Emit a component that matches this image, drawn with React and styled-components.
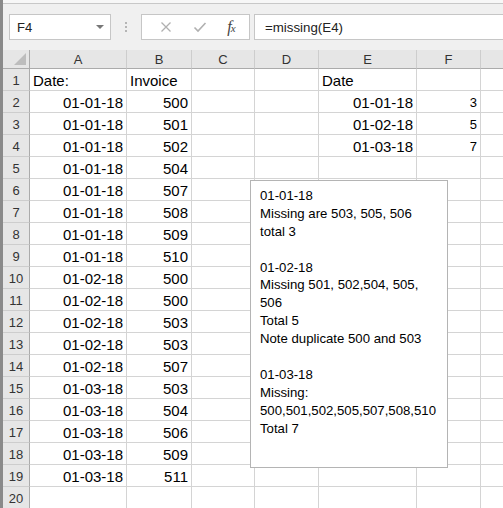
import React from 'react';
import styled, { createGlobalStyle } from 'styled-components';

const GlobalStyle = createGlobalStyle`
  html, body {
    margin: 0;
    padding: 0;
    background: #ffffff;
    overflow: hidden;
  }
  body {
    font-family: "Liberation Sans", Arial, sans-serif;
  }
`;

// row header, A..G (G runs off the window)
const COLS = [27, 97, 65, 63, 64, 98, 64, 80];
const LETTERS = ['A', 'B', 'C', 'D', 'E', 'F', 'G'];

const rows = [
  ['Date:', 'Invoice', '', '', 'Date', ''],
  ['01-01-18', '500', '', '', '01-01-18', '3'],
  ['01-01-18', '501', '', '', '01-02-18', '5'],
  ['01-01-18', '502', '', '', '01-03-18', '7'],
  ['01-01-18', '504'],
  ['01-01-18', '507'],
  ['01-01-18', '508'],
  ['01-01-18', '509'],
  ['01-01-18', '510'],
  ['01-02-18', '500'],
  ['01-02-18', '500'],
  ['01-02-18', '503'],
  ['01-02-18', '503'],
  ['01-02-18', '507'],
  ['01-03-18', '503'],
  ['01-03-18', '504'],
  ['01-03-18', '506'],
  ['01-03-18', '509'],
  ['01-03-18', '511'],
  [],
];

const noteLines = [
  '01-01-18',
  'Missing are 503, 505, 506',
  'total 3',
  '',
  '01-02-18',
  'Missing 501, 502,504, 505,',
  '506',
  'Total 5',
  'Note duplicate 500 and 503',
  '',
  '01-03-18',
  'Missing:',
  '500,501,502,505,507,508,510',
  'Total 7',
];

// Window chrome
const Page = styled.div`
  width: 503px;
  height: 508px;
  overflow: hidden;
  position: relative;
  border-left: 3px solid #8a8a8a;
  box-sizing: border-box;
`;

const TopStrip = styled.div`
  height: 3px;
  background: #f7f7f7;
  border-bottom: 1px solid #c8c8c8;
`;

const FormulaBar = styled.div`
  height: 46px;
  background: #f0f0f0;
  display: flex;
  align-items: flex-start;
  padding-top: 10px;
  padding-left: 6px;
  box-sizing: border-box;
`;

const NameBox = styled.div`
  width: 102px;
  height: 26px;
  box-sizing: border-box;
  background: #fff;
  border: 1px solid #c6c6c6;
  display: flex;
  align-items: center;
  justify-content: space-between;
  padding: 0 6px 0 7px;
  font-size: 13px;
  color: #222;
`;

const Caret = styled.span`
  width: 0;
  height: 0;
  border-left: 4px solid transparent;
  border-right: 4px solid transparent;
  border-top: 4px solid #777;
`;

const Grip = styled.div`
  width: 30px;
  height: 26px;
  display: flex;
  flex-direction: column;
  align-items: center;
  justify-content: center;
  gap: 2px;
  span {
    width: 2px;
    height: 2px;
    background: #b5b5b5;
  }
`;

const FxBox = styled.div`
  width: 109px;
  height: 26px;
  box-sizing: border-box;
  background: #fff;
  border: 1px solid #c6c6c6;
  display: flex;
  align-items: center;
  justify-content: space-around;
  padding: 0 4px 0 8px;
`;

const FxLabel = styled.span`
  font-family: "Liberation Serif", "Times New Roman", serif;
  font-style: italic;
  font-size: 16px;
  color: #444;
  letter-spacing: -1px;
  sub {
    font-size: 11px;
    vertical-align: 0;
  }
`;

const FormulaInput = styled.div`
  flex: 1;
  height: 26px;
  margin-left: 4px;
  box-sizing: border-box;
  background: #fff;
  border: 1px solid #c6c6c6;
  border-right: none;
  display: flex;
  align-items: center;
  padding-left: 10px;
  font-size: 13.3px;
  color: #222;
`;

// Sheet
const Sheet = styled.div`
  position: relative;
`;

const Grid = styled.div`
  display: grid;
  grid-template-columns: ${COLS.map((w) => w + 'px').join(' ')};
  grid-template-rows: 19px;
  grid-auto-rows: 22px;
`;

const Corner = styled.div`
  background: #e6e6e6;
  border-right: 1px solid #ababab;
  border-bottom: 1px solid #ababab;
  position: relative;
  &::after {
    content: '';
    position: absolute;
    right: 3px;
    bottom: 3px;
    border-left: 12px solid transparent;
    border-bottom: 12px solid #bdbdbd;
  }
`;

const ColHead = styled.div`
  background: #e6e6e6;
  border-right: 1px solid #cdcdcd;
  border-bottom: 1px solid #ababab;
  display: flex;
  align-items: center;
  justify-content: center;
  font-size: 13px;
  color: #333;
`;

const RowHead = styled.div`
  background: #e6e6e6;
  border-right: 1px solid #ababab;
  border-bottom: 1px solid #cdcdcd;
  display: flex;
  align-items: center;
  justify-content: center;
  padding-top: 2px;
  box-sizing: border-box;
  font-size: 13px;
  color: #333;
`;

const Cell = styled.div`
  border-right: 1px solid #d4d4d4;
  border-bottom: 1px solid #d4d4d4;
  display: flex;
  align-items: center;
  justify-content: ${(p) => (p.$right ? 'flex-end' : 'flex-start')};
  padding: 2px 3px 0 3px;
  box-sizing: border-box;
  font-size: ${(p) => (p.$small ? '13px' : '15px')};
  color: #000;
  white-space: nowrap;
  overflow: hidden;
`;

const Note = styled.div`
  position: absolute;
  left: 247px;
  top: 130px;
  width: 198px;
  height: 288px;
  box-sizing: border-box;
  background: #fff;
  border: 1px solid #b4b4b4;
  padding: 6px 0 0 9px;
  font-size: 13.2px;
  line-height: 17.9px;
  color: #000;
`;

const NoteLine = styled.div`
  height: 17.9px;
  white-space: nowrap;
`;

const Cross = () => (
  <svg width="12" height="12" viewBox="0 0 12 12">
    <path d="M1.5 1.5 L10.5 10.5 M10.5 1.5 L1.5 10.5" stroke="#b0b0b0" strokeWidth="1.3" fill="none" />
  </svg>
);

const Check = () => (
  <svg width="14" height="12" viewBox="0 0 14 12">
    <path d="M1.5 6.5 L5 10 L12.5 2" stroke="#b0b0b0" strokeWidth="1.6" fill="none" />
  </svg>
);

const isNumeric = (v) => /^[0-9-]+$/.test(v);

export default function App() {
  return (
    <>
      <GlobalStyle />
      <Page>
        <TopStrip />
        <FormulaBar>
          <NameBox>
            F4
            <Caret />
          </NameBox>
          <Grip>
            <span />
            <span />
            <span />
          </Grip>
          <FxBox>
            <Cross />
            <Check />
            <FxLabel>
              f<sub>x</sub>
            </FxLabel>
          </FxBox>
          <FormulaInput>=missing(E4)</FormulaInput>
        </FormulaBar>
        <Sheet>
          <Grid>
            <Corner />
            {LETTERS.map((l) => (
              <ColHead key={l}>{l}</ColHead>
            ))}
            {rows.map((r, i) => (
              <React.Fragment key={i}>
                <RowHead>{i + 1}</RowHead>
                {LETTERS.map((l, j) => {
                  const v = r[j] || '';
                  return (
                    <Cell key={l} $right={isNumeric(v)} $small={j === 5}>
                      {v}
                    </Cell>
                  );
                })}
              </React.Fragment>
            ))}
          </Grid>
          <Note>
            {noteLines.map((t, i) => (
              <NoteLine key={i}>{t}</NoteLine>
            ))}
          </Note>
        </Sheet>
      </Page>
    </>
  );
}
